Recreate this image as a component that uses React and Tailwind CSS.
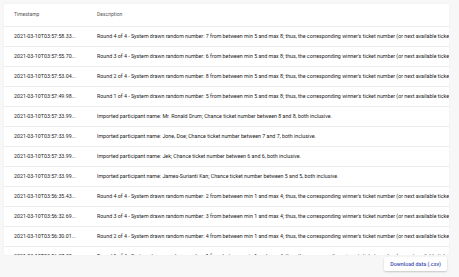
const rows = [
  ['2021-03-10T03:57:58.33...', 'Round 4 of 4 - System drawn random number: 7 from between min 5 and max 8; thus, the corresponding winner\'s ticket number (or next available ticket number) is chosen.'],
  ['2021-03-10T03:57:55.70...', 'Round 3 of 4 - System drawn random number: 6 from between min 5 and max 8; thus, the corresponding winner\'s ticket number (or next available ticket number) is chosen.'],
  ['2021-03-10T03:57:53.04...', 'Round 2 of 4 - System drawn random number: 8 from between min 5 and max 8; thus, the corresponding winner\'s ticket number (or next available ticket number) is chosen.'],
  ['2021-03-10T03:57:49.98...', 'Round 1 of 4 - System drawn random number: 5 from between min 5 and max 8; thus, the corresponding winner\'s ticket number (or next available ticket number) is chosen.'],
  ['2021-03-10T03:57:33.99...', 'Imported participant name: Mr. Ronald Drum; Chance ticket number between 8 and 8, both inclusive.'],
  ['2021-03-10T03:57:33.99...', 'Imported participant name: Jone, Doe; Chance ticket number between 7 and 7, both inclusive.'],
  ['2021-03-10T03:57:33.99...', 'Imported participant name: Jek; Chance ticket number between 6 and 6, both inclusive.'],
  ['2021-03-10T03:57:33.99...', 'Imported participant name: James-Surianti Kan; Chance ticket number between 5 and 5, both inclusive.'],
  ['2021-03-10T03:56:35.43...', 'Round 4 of 4 - System drawn random number: 2 from between min 1 and max 4; thus, the corresponding winner\'s ticket number (or next available ticket number) is chosen.'],
  ['2021-03-10T03:56:32.69...', 'Round 3 of 4 - System drawn random number: 3 from between min 1 and max 4; thus, the corresponding winner\'s ticket number (or next available ticket number) is chosen.'],
  ['2021-03-10T03:56:30.01...', 'Round 2 of 4 - System drawn random number: 4 from between min 1 and max 4; thus, the corresponding winner\'s ticket number (or next available ticket number) is chosen.'],
  ['2021-03-10T03:56:27.35...', 'Round 1 of 4 - System drawn random number: 1 from between min 1 and max 4; thus, the corresponding winner\'s ticket number (or next available ticket number) is chosen.'],
]

export default function App() {
  return (
    <div className="w-[459px] h-[277px] overflow-hidden bg-[#f7f7f7] pt-[4px] pl-[4px] font-['Roboto','Liberation_Sans',sans-serif]">
      {/* Log table */}
      <div className="w-[445px] h-[251px] overflow-hidden bg-white rounded-[2px] shadow-[0_0_2px_rgba(0,0,0,0.06)]">
        <div className="flex items-center h-[23px] border-b border-[#ececec] text-[5px] text-[#555]">
          <div className="w-[93px] shrink-0 pl-[10px]">Timestamp</div>
          <div className="whitespace-nowrap">Description</div>
        </div>
        {rows.map((r, i) => (
          <div key={i} className="flex items-center h-[20px] border-b border-[#ececec] text-[5.3px] text-[#222] whitespace-nowrap">
            <div className="w-[93px] shrink-0 pl-[10px]">{r[0]}</div>
            <div className="overflow-hidden">{r[1]}</div>
          </div>
        ))}
      </div>

      {/* Download */}
      <div className="flex justify-end pr-[12px] mt-[2px]">
        <button className="h-[14px] px-[6px] bg-white rounded-[2px] shadow-[0_1px_2px_rgba(0,0,0,0.2)] text-[5.4px] font-medium text-[#3f51b5]">
          Download data (.csv)
        </button>
      </div>
    </div>
  )
}
